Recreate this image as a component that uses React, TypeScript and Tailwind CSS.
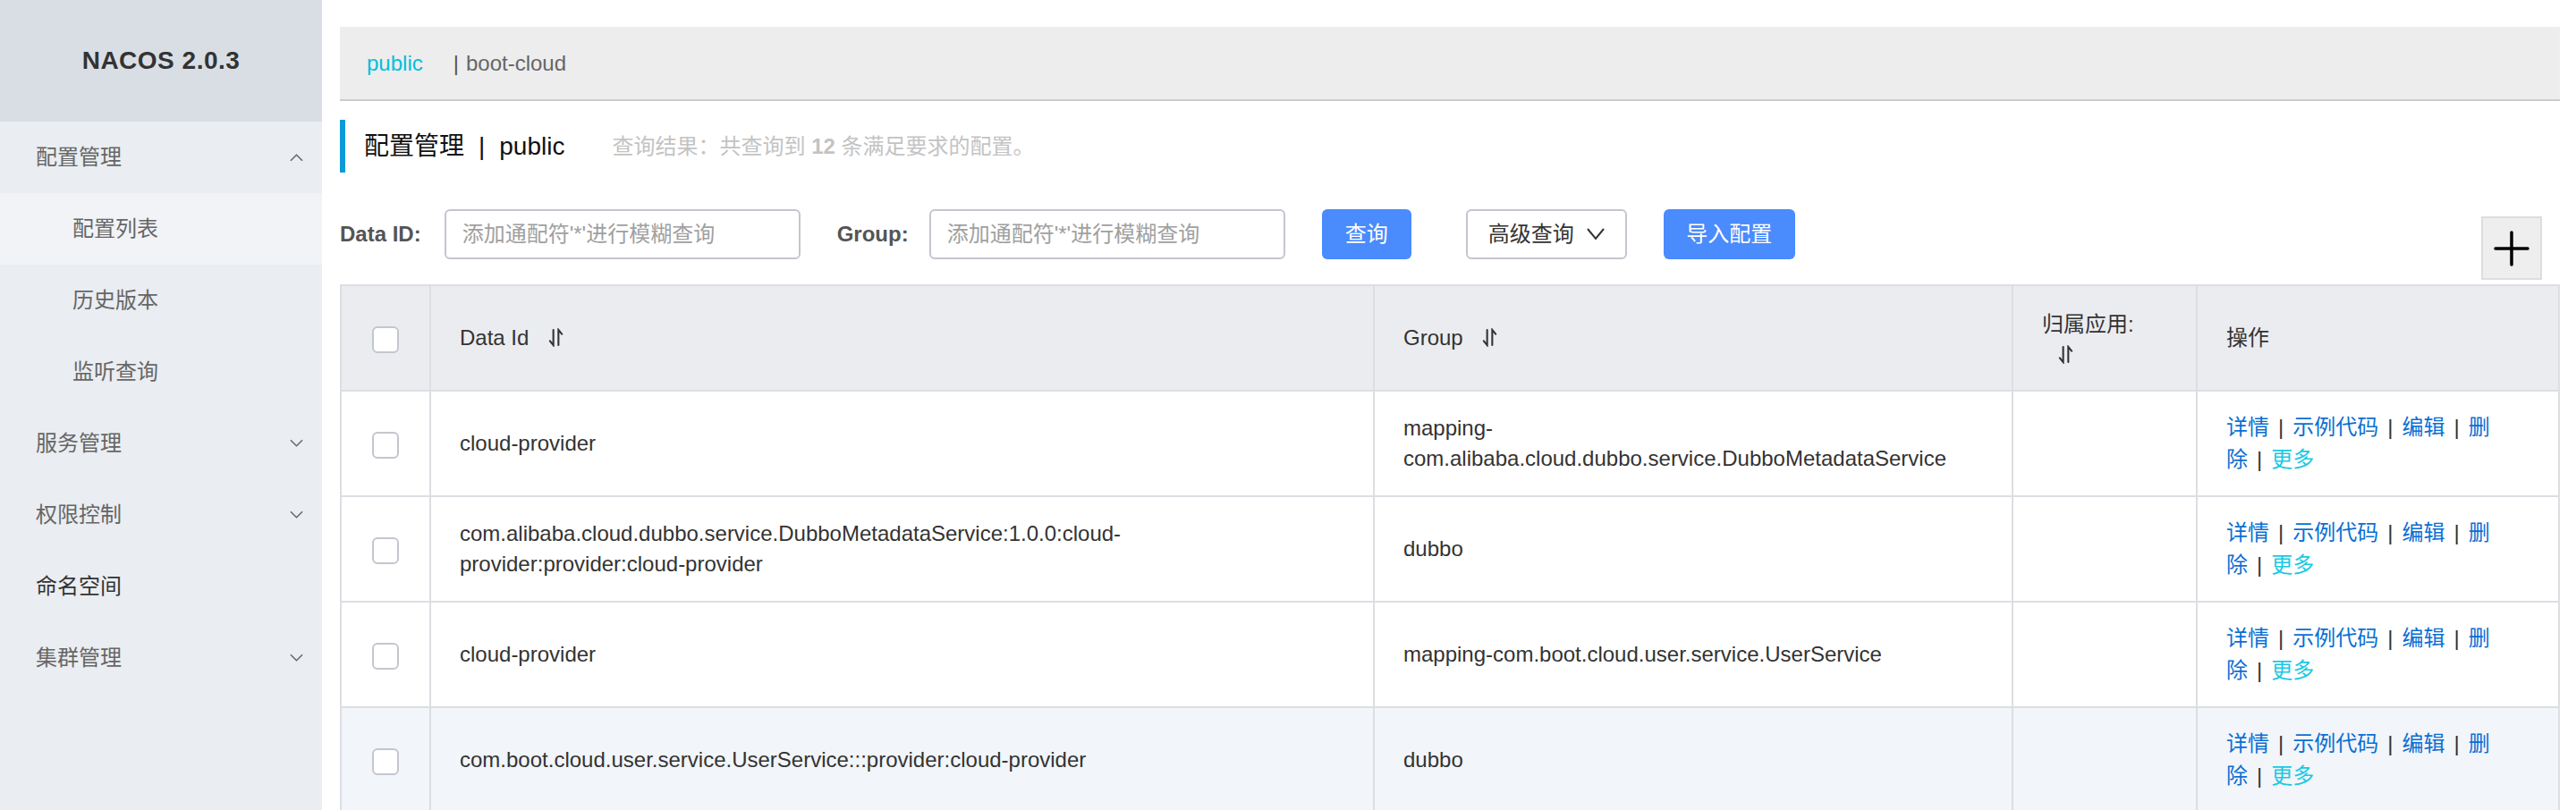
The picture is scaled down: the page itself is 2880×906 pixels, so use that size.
import React from 'react';

const SortIcon = ({ className = '' }: { className?: string }) => (
  <svg viewBox="0 0 20 22" className={`inline-block w-[19px] h-[21px] ${className}`} fill="none" stroke="#333" strokeWidth="2.2" strokeLinecap="round">
    <path d="M7 2 V20 L3 15" />
    <path d="M13 20 V2 L17 7" />
  </svg>
);

const Chevron = ({ up = false }: { up?: boolean }) => (
  <svg viewBox="0 0 16 10" className="w-[15px] h-[10px]" fill="none" stroke="#666" strokeWidth="1.6">
    {up ? <path d="M1 9 L8 2 L15 9" /> : <path d="M1 1 L8 8 L15 1" />}
  </svg>
);

const Checkbox = () => (
  <span className="inline-block w-[30px] h-[30px] rounded-[6px] border-2 border-[#c4c6cf] bg-white align-middle" />
);

const menu = [
  { label: '配置管理', kind: 'parent', open: true },
  { label: '配置列表', kind: 'child', active: true },
  { label: '历史版本', kind: 'child' },
  { label: '监听查询', kind: 'child' },
  { label: '服务管理', kind: 'parent' },
  { label: '权限控制', kind: 'parent' },
  { label: '命名空间', kind: 'leaf' },
  { label: '集群管理', kind: 'parent' },
];

const rows = [
  { dataId: 'cloud-provider', group: 'mapping-com.alibaba.cloud.dubbo.service.DubboMetadataService' },
  { dataId: 'com.alibaba.cloud.dubbo.service.DubboMetadataService:1.0.0:cloud-provider:provider:cloud-provider', group: 'dubbo' },
  { dataId: 'cloud-provider', group: 'mapping-com.boot.cloud.user.service.UserService' },
  { dataId: 'com.boot.cloud.user.service.UserService:::provider:cloud-provider', group: 'dubbo', hover: true },
];

const Sep = () => <span className="mx-[10px] text-[#333]">|</span>;

const Actions = () => (
  <div className="leading-[36px] text-[#0a6fd3]">
    <div>
      <span>详情</span>
      <Sep />
      <span>示例代码</span>
      <Sep />
      <span>编辑</span>
      <Sep />
      <span>删</span>
    </div>
    <div>
      <span>除</span>
      <Sep />
      <span className="text-[#1cc8e3]">更多</span>
    </div>
  </div>
);

const Sidebar = () => (
  <aside className="w-[360px] shrink-0 bg-[#eaedf1]">
    <div className="h-[136px] bg-[#d9dee5] flex items-center justify-center">
      <span className="text-[28px] font-bold text-[#333] tracking-[0.5px]">NACOS 2.0.3</span>
    </div>
    {menu.map((m) => (
      <div
        key={m.label}
        className={`h-[80px] flex items-center justify-between pr-[21px] text-[24px] ${
          m.kind === 'child' ? 'pl-[81px]' : 'pl-[40px]'
        } ${m.active ? 'bg-[#f1f3f7]' : ''} ${m.kind === 'leaf' ? 'text-[#333]' : 'text-[#666]'}`}
      >
        <span>{m.label}</span>
        {m.kind === 'parent' && <Chevron up={m.open} />}
      </div>
    ))}
  </aside>
);

export default function App() {
  return (
    <div className="flex h-[906px] w-[2880px] overflow-hidden bg-white font-['Liberation_Sans','Noto_Sans_CJK_SC',sans-serif]">
      <Sidebar />

      <main className="flex-1 px-[20px] pt-[30px]">
        {/* breadcrumb */}
        <div className="h-[83px] bg-[#ededed] border-b-2 border-[#ccc] flex items-center pl-[30px] text-[24px]">
          <span className="text-[#00bfdc]">public</span>
          <span className="ml-[34px] text-[#555]">|</span>
          <span className="ml-[8px] text-[#666]">boot-cloud</span>
        </div>

        {/* title */}
        <div className="mt-[21px] h-[59px] border-l-[6px] border-[#0a9ad9] flex items-center pl-[21px]">
          <span className="text-[28px] text-[#111]">配置管理</span>
          <span className="text-[28px] text-[#111] mx-[16px]">|</span>
          <span className="text-[28px] text-[#111]">public</span>
          <span className="ml-[53px] text-[24px] text-[#c3c3c3]">
            查询结果：共查询到 <b>12</b> 条满足要求的配置。
          </span>
        </div>

        {/* filter row */}
        <div className="mt-[41px] h-[84px] flex items-start text-[24px]">
          <label className="h-[56px] flex items-center font-bold text-[#555]">Data ID:</label>
          <input
            className="ml-[26px] w-[398px] h-[56px] rounded-[6px] border-2 border-[#c4c6cf] px-[18px] placeholder:text-[#a0a0a0] outline-none"
            placeholder="添加通配符'*'进行模糊查询"
          />
          <label className="ml-[41px] h-[56px] flex items-center font-bold text-[#555]">Group:</label>
          <input
            className="ml-[23px] w-[398px] h-[56px] rounded-[6px] border-2 border-[#c4c6cf] px-[18px] placeholder:text-[#a0a0a0] outline-none"
            placeholder="添加通配符'*'进行模糊查询"
          />
          <button className="ml-[41px] w-[100px] h-[56px] rounded-[6px] bg-[#4a8bfd] text-white">查询</button>
          <button className="ml-[61px] w-[180px] h-[56px] rounded-[6px] border-2 border-[#c4c6cf] bg-white text-[#333] flex items-center justify-center gap-[14px]">
            高级查询
            <svg viewBox="0 0 20 14" className="w-[20px] h-[14px]" fill="none" stroke="#333" strokeWidth="2">
              <path d="M1 1 L10 12 L19 1" />
            </svg>
          </button>
          <button className="ml-[41px] w-[147px] h-[56px] rounded-[6px] bg-[#4a8bfd] text-white">导入配置</button>
          <div className="ml-auto mr-[20px] mt-[8px] w-[68px] h-[71px] bg-[#eee] border-2 border-[#ddd] flex items-center justify-center">
            <svg viewBox="0 0 40 40" className="w-[40px] h-[40px]" fill="none" stroke="#000" strokeWidth="3.5" strokeLinecap="round">
              <path d="M20 2 V38 M2 20 H38" />
            </svg>
          </div>
        </div>

        {/* table */}
        <table className="w-[2480px] table-fixed border-collapse text-[24px] text-[#333] leading-[34px]">
          <colgroup>
            <col className="w-[100px]" />
            <col className="w-[1055px]" />
            <col className="w-[714px]" />
            <col className="w-[206px]" />
            <col className="w-[405px]" />
          </colgroup>
          <thead>
            <tr className="h-[118px] bg-[#ebecf0]">
              <th className="border-2 border-[#dcdee3] text-center font-normal">
                <Checkbox />
              </th>
              <th className="border-2 border-[#dcdee3] px-[32px] text-left font-normal">
                Data Id <SortIcon className="ml-[14px] -mt-[4px] align-middle" />
              </th>
              <th className="border-2 border-[#dcdee3] px-[32px] text-left font-normal">
                Group <SortIcon className="ml-[14px] -mt-[4px] align-middle" />
              </th>
              <th className="border-2 border-[#dcdee3] px-[32px] text-left font-normal">
                <div>归属应用:</div>
                <div className="pl-[17px] leading-[30px]">
                  <SortIcon className="align-middle" />
                </div>
              </th>
              <th className="border-2 border-[#dcdee3] px-[32px] text-left font-normal">操作</th>
            </tr>
          </thead>
          <tbody>
            {rows.map((r, i) => (
              <tr key={i} className={`h-[118px] ${r.hover ? 'bg-[#f2f5f9]' : 'bg-white'}`}>
                <td className="border-2 border-[#dcdee3] text-center">
                  <Checkbox />
                </td>
                <td className="border-2 border-[#dcdee3] px-[32px]">{r.dataId}</td>
                <td className="border-2 border-[#dcdee3] px-[32px]">{r.group}</td>
                <td className="border-2 border-[#dcdee3] px-[32px]"></td>
                <td className="border-2 border-[#dcdee3] px-[32px]">
                  <Actions />
                </td>
              </tr>
            ))}
          </tbody>
        </table>
      </main>
    </div>
  );
}
